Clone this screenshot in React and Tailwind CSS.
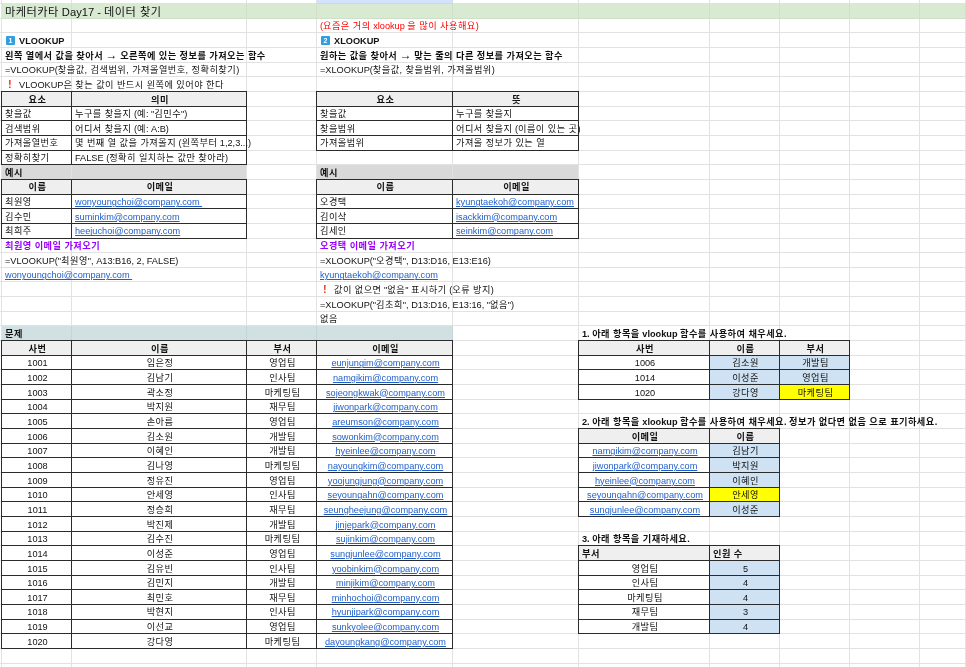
import React from "react";

const GRID = "border-r border-b border-[#e2e2e2]";
const DARK = "border border-[#2b2b2b] -ml-px -mt-px";
const SPANS = { 1: "", 2: "col-span-2", 3: "col-span-3", 4: "col-span-4" };
const WIDE = "bg-[#d9ead3]";

const Link = ({ children }) => (
  <span className="text-[#1f5fcb] underline underline-offset-1">{children}</span>
);
const Key = ({ children }) => (
  <span className="inline-flex items-center justify-center align-[1px] w-[9px] h-[9px] rounded-[1px] bg-[#2f9fe0] text-white text-[7px] font-bold mr-[4px] ml-[1px]">
    {children}
  </span>
);
const Bang = () => <span className="inline-block w-[14px] pl-[3px] text-left text-[#e8382c] font-bold text-[11px] leading-[10px]">!</span>;

// Hangul in the reference sets wider than Noto at this size, and its arrow is longer
const Han = ({ t }) =>
  t.split(/([가-힣]+(?:[ ,]+[가-힣]+)*|→)/).map((part, i) =>
    part === "→" ? (
      <span key={i} className="text-[12px] leading-[10px]">{part}</span>
    ) : /[가-힣]/.test(part) ? (
      <span key={i} className="tracking-[0.45px]">{part}</span>
    ) : (
      <React.Fragment key={i}>{part}</React.Fragment>
    )
  );

const hd = (c, t, extra = "") => ({ c, t, cls: `${DARK} bg-[#efefef] font-bold justify-center ${extra}` });
const td = (c, t, extra = "") => ({ c, t, cls: `${DARK} bg-white ${extra}` });
const ctr = (c, t, extra = "") => td(c, t, `justify-center ${extra}`);
const ans = (c, t) => ({ c, t, cls: `${DARK} bg-[#cfe2f3] justify-center` });
const yel = (c, t) => ({ c, t, cls: `${DARK} bg-[#ffff00] justify-center` });
const txt = (c, t, cls = "") => ({ c, t, cls: `${GRID} ${cls}` });
const grey = (c, s = 1) => ({ c, s, t: "", cls: `${GRID} bg-[#d9d9d9]` });

const people = [
  ["1001", "임은정", "영업팀", "eunjungim"],
  ["1002", "김남기", "인사팀", "namgikim"],
  ["1003", "곽소정", "마케팅팀", "sojeongkwak"],
  ["1004", "박지원", "재무팀", "jiwonpark"],
  ["1005", "손아름", "영업팀", "areumson"],
  ["1006", "김소원", "개발팀", "sowonkim"],
  ["1007", "이혜인", "개발팀", "hyeinlee"],
  ["1008", "김나영", "마케팅팀", "nayoungkim"],
  ["1009", "정유진", "영업팀", "yoojungjung"],
  ["1010", "안세영", "인사팀", "seyoungahn"],
  ["1011", "정승희", "재무팀", "seungheejung"],
  ["1012", "박진제", "개발팀", "jinjepark"],
  ["1013", "김수진", "마케팅팀", "sujinkim"],
  ["1014", "이성준", "영업팀", "sungjunlee"],
  ["1015", "김유빈", "인사팀", "yoobinkim"],
  ["1016", "김민지", "개발팀", "minjikim"],
  ["1017", "최민호", "재무팀", "minhochoi"],
  ["1018", "박현지", "인사팀", "hyunjipark"],
  ["1019", "이선교", "영업팀", "sunkyolee"],
  ["1020", "강다영", "마케팅팀", "dayoungkang"],
];
const mail = (n) => <Link>{n}@company.com</Link>;

const rows = {};
for (let i = 1; i <= 46; i++) rows[i] = [];
rows[1] = [
  { c: 0, t: "마케터카타 Day17 - 데이터 찾기", cls: `border-r border-b border-[#cfdfc9] ${WIDE} text-[11.2px]` },
  ...[1, 2, 3, 4, 5, 6, 7, 8, 9].map((c) => ({ c, t: "", cls: `border-r border-b border-[#cfdfc9] ${WIDE}` })),
];
rows[2] = [txt(3, "(요즘은 거의 xlookup 을 많이 사용해요)", "text-[#ff0000]")];
rows[3] = [
  txt(0, <><Key>1</Key>VLOOKUP</>, "font-bold"),
  txt(3, <><Key>2</Key>XLOOKUP</>, "font-bold"),
];
rows[4] = [
  txt(0, "왼쪽 열에서 값을 찾아서 → 오른쪽에 있는 정보를 가져오는 함수", "font-bold"),
  txt(3, "원하는 값을 찾아서 → 맞는 줄의 다른 정보를 가져오는 함수", "font-bold"),
];
rows[5] = [
  txt(0, "=VLOOKUP(찾을값, 검색범위, 가져올열번호, 정확히찾기)"),
  txt(3, "=XLOOKUP(찾을값, 찾을범위, 가져올범위)"),
];
rows[6] = [txt(0, <><Bang /><Han t="VLOOKUP은 찾는 값이 반드시 왼쪽에 있어야 한다" /></>)];
rows[7] = [hd(0, "요소"), hd(1, "의미"), hd(3, "요소"), hd(4, "뜻")];
rows[8] = [td(0, "찾을값"), td(1, "누구를 찾을지 (예: \"김민수\")"), td(3, "찾을값"), td(4, "누구를 찾을지")];
rows[9] = [td(0, "검색범위"), td(1, "어디서 찾을지 (예: A:B)"), td(3, "찾을범위"), td(4, "어디서 찾을지 (이름이 있는 곳)")];
rows[10] = [td(0, "가져올열번호"), td(1, "몇 번째 열 값을 가져올지 (왼쪽부터 1,2,3...)"), td(3, "가져올범위"), td(4, "가져올 정보가 있는 열")];
rows[11] = [td(0, "정확히찾기"), td(1, "FALSE (정확히 일치하는 값만 찾아라)")];
rows[12] = [
  { c: 0, t: "예시", cls: `${GRID} bg-[#d9d9d9] font-bold` },
  grey(1),
  { c: 3, t: "예시", cls: `${GRID} bg-[#d9d9d9] font-bold` },
  grey(4),
];
rows[13] = [hd(0, "이름"), hd(1, "이메일"), hd(3, "이름"), hd(4, "이메일")];
rows[14] = [td(0, "최원영"), td(1, <Link>wonyoungchoi@company.com&nbsp;</Link>), td(3, "오경택"), td(4, mail("kyungtaekoh"))];
rows[15] = [td(0, "김수민"), td(1, mail("suminkim")), td(3, "김이삭"), td(4, mail("isackkim"))];
rows[16] = [td(0, "최희주"), td(1, mail("heejuchoi")), td(3, "김세인"), td(4, mail("seinkim"))];
rows[17] = [
  txt(0, "최원영 이메일 가져오기", "font-bold text-[#9900ff]"),
  txt(3, "오경택 이메일 가져오기", "font-bold text-[#9900ff]"),
];
rows[18] = [
  txt(0, "=VLOOKUP(\"최원영\", A13:B16, 2, FALSE)"),
  txt(3, "=XLOOKUP(\"오경택\", D13:D16, E13:E16)"),
];
rows[19] = [txt(0, <Link>wonyoungchoi@company.com&nbsp;</Link>), txt(3, mail("kyungtaekoh"))];
rows[20] = [txt(3, <><Bang /><Han t={'값이 없으면 "없음" 표시하기 (오류 방지)'} /></>)];
rows[21] = [txt(3, "=XLOOKUP(\"김초희\", D13:D16, E13:16, \"없음\")")];
rows[22] = [txt(3, "없음")];
rows[23] = [
  { c: 0, t: "문제", cls: `border-r border-b border-[#c4d5d8] bg-[#d0e0e3] font-bold` },
  ...[1, 2, 3].map((c) => ({ c, t: "", cls: `border-r border-b border-[#c4d5d8] bg-[#d0e0e3]` })),
  txt(5, "1. 아래 항목을 vlookup 함수를 사용하여 채우세요.", "font-bold"),
];
rows[24] = [hd(0, "사번"), hd(1, "이름"), hd(2, "부서"), hd(3, "이메일")];
people.forEach((p, i) => {
  rows[25 + i] = [ctr(0, p[0]), ctr(1, p[1]), ctr(2, p[2]), ctr(3, mail(p[3]))];
});
rows[24].push(hd(5, "사번"), hd(6, "이름"), hd(7, "부서"));
rows[25].push(ctr(5, "1006"), ans(6, "김소원"), ans(7, "개발팀"));
rows[26].push(ctr(5, "1014"), ans(6, "이성준"), ans(7, "영업팀"));
rows[27].push(ctr(5, "1020"), ans(6, "강다영"), yel(7, "마케팅팀"));
rows[29].push(txt(5, "2. 아래 항목을 xlookup 함수를 사용하여 채우세요. 정보가 없다면 없음 으로 표기하세요.", "font-bold"));
rows[30].push(hd(5, "이메일"), hd(6, "이름"));
rows[31].push(ctr(5, mail("namgikim")), ans(6, "김남기"));
rows[32].push(ctr(5, mail("jiwonpark")), ans(6, "박지원"));
rows[33].push(ctr(5, mail("hyeinlee")), ans(6, "이혜인"));
rows[34].push(ctr(5, mail("seyoungahn")), yel(6, "안세영"));
rows[35].push(ctr(5, mail("sungjunlee")), ans(6, "이성준"));
rows[37].push(txt(5, "3. 아래 항목을 기재하세요.", "font-bold"));
rows[38].push(td(5, "부서", "!bg-[#efefef] font-bold"), td(6, "인원 수", "!bg-[#efefef] font-bold"));
[["영업팀", "5"], ["인사팀", "4"], ["마케팅팀", "4"], ["재무팀", "3"], ["개발팀", "4"]].forEach((d, i) => {
  rows[39 + i].push(ctr(5, d[0]), ans(6, d[1]));
});

const COLS = 10;
const TOTAL = 46;

function Row({ n }) {
  const cells = rows[n];
  const out = [<div key="m" className="border-r border-b border-[#e2e2e2]" />];
  for (let c = 0; c < COLS; c++) {
    const cell = cells.find((x) => x.c === c);
    if (cell) {
      out.push(
        <div
          key={c}
          className={`${SPANS[cell.s || 1]} ${cell.cls} ${cell.t === "" ? "" : "z-10"} min-w-0 flex items-center whitespace-nowrap pl-[3px] pr-[1px] pt-[1.5px]`}
        >
          <span>{typeof cell.t === "string" ? <Han t={cell.t} /> : cell.t}</span>
        </div>
      );
    } else {
      out.push(<div key={c} className={GRID} />);
    }
  }
  return <>{out}</>;
}

export default function App() {
  return (
    <div className="w-[966px] h-[667px] overflow-hidden bg-white">
      <div
        className="grid grid-cols-[2px_70px_175px_70px_136px_126px_131px_70px_70px_70px_46px] grid-rows-[4px_repeat(46,14.667px)] text-[9.2px] leading-[12px] text-[#111] blur-[0.4px]"
        style={{ fontFamily: '"Liberation Sans", "Noto Sans CJK KR", sans-serif' }}
      >
        <div className={GRID} />
        <div className={GRID} />
        <div className={GRID} />
        <div className={GRID} />
        <div className="border-r border-b border-[#c9d9f2] bg-[#d3e3fd]" />
        <div className={GRID} />
        <div className={GRID} />
        <div className={GRID} />
        <div className={GRID} />
        <div className={GRID} />
        <div className={GRID} />
        {Array.from({ length: TOTAL }, (_, i) => (
          <Row key={i} n={i + 1} />
        ))}
      </div>
    </div>
  );
}
